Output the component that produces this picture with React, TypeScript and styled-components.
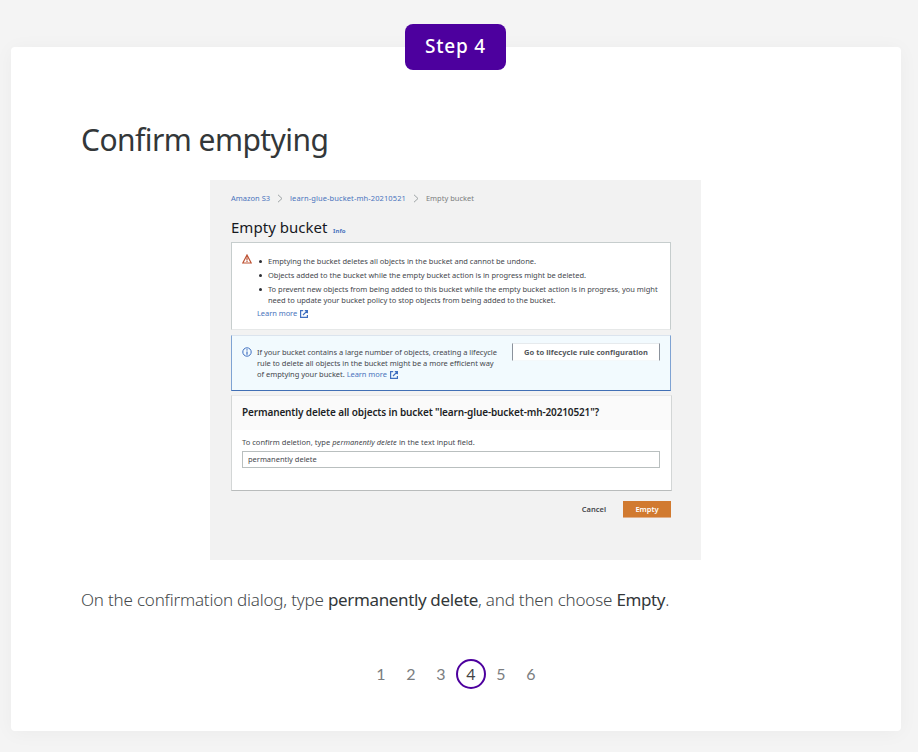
import React from 'react';
import styled, { createGlobalStyle } from 'styled-components';

const GlobalStyle = createGlobalStyle`
  * { box-sizing: border-box; }
  body {
    margin: 0;
    background: #f4f4f4;
    font-family: "Noto Sans", "Open Sans", sans-serif;
    color: #333;
  }
  h1, h2, h3, p, ul, ol { margin: 0; padding: 0; }
`;

const Page = styled.main`
  height: 752px;
  padding: 24px 17px 21px 11px;
  display: flex;
  flex-direction: column;
  overflow: hidden;
`;

const StepBadge = styled.div`
  z-index: 1;
  width: 101px;
  height: 46px;
  margin: 0 0 -23px -1px;
  align-self: center;
  flex: none;
  display: flex;
  align-items: center;
  justify-content: center;
  padding-bottom: 2px;
  border-radius: 8px;
  background: #4d009e;
  color: #fff;
  font-size: 19px;
  font-weight: 500;
  letter-spacing: 0.8px;
`;

const Card = styled.section`
  flex: 1;
  display: flex;
  flex-direction: column;
  padding: 70px 70px 0;
  border-radius: 4px;
  background: #fff;
  box-shadow: 0 2px 20px rgba(0, 0, 0, 0.04);
`;

const Heading = styled.h1`
  height: 63px;
  line-height: 46px;
  font-size: 30px;
  font-weight: 370;
  letter-spacing: -0.55px;
  color: #333739;
`;

const Caption = styled.p`
  margin-top: 28px;
  line-height: 24px;
  font-size: 17px;
  font-weight: 300;
  letter-spacing: -0.2px;
  color: #45494b;
  white-space: nowrap;
  strong {
    font-weight: 430;
    letter-spacing: -0.36px;
    color: #333739;
  }
`;

const Pager = styled.nav`
  display: flex;
  justify-content: center;
  margin-top: 47px;
`;

const PageNumber = styled.a<{ $current?: boolean }>`
  width: 30px;
  height: 30px;
  padding-bottom: 1px;
  display: flex;
  align-items: center;
  justify-content: center;
  border: 2px solid ${(p) => (p.$current ? '#4d009e' : 'transparent')};
  border-radius: 50%;
  font-family: Lato, sans-serif;
  font-size: 16px;
  color: ${(p) => (p.$current ? '#444' : '#7b7d80')};
`;

const Figure = styled.div`
  width: 491px;
  height: 380px;
  margin-left: 129px;
  padding: 12px 30px 0 21px;
  flex: none;
  display: flex;
  flex-direction: column;
  background: #f2f2f2;
  font-size: 7.5px;
  line-height: 11px;
  color: #45474d;
  white-space: nowrap;
`;

const Breadcrumbs = styled.div`
  display: flex;
  align-items: center;
  height: 12px;
  color: #4a74bd;
`;

const Crumb = styled.span<{ $tracking?: number; $muted?: boolean }>`
  letter-spacing: ${(p) => p.$tracking ?? 0}px;
  color: ${(p) => (p.$muted ? '#7c7e80' : 'inherit')};
`;

const Chevron = styled.svg`
  width: 6px;
  height: 9px;
  margin: 0 7px;
  fill: none;
  stroke: #9da3a5;
`;

const TitleRow = styled.div`
  display: flex;
  align-items: baseline;
  height: 38px;
  padding-top: 12px;
  gap: 5.5px;
`;

const Title = styled.h2`
  font-size: 15px;
  line-height: 22px;
  font-weight: 400;
  letter-spacing: 0.03px;
  color: #17191f;
`;

const InfoLink = styled.span`
  font-size: 6px;
  font-weight: 700;
  letter-spacing: 0.1px;
  color: #4a74bd;
`;

const Warning = styled.div`
  display: flex;
  width: 440px;
  height: 88px;
  padding: 13px 10px 0;
  border: 1px solid #c6cdcd;
  border-bottom-color: #e6e8e8;
  background: #fff;
`;

const StatusIcon = styled.svg<{ $lift?: number }>`
  width: 10px;
  height: 10px;
  margin-top: ${(p) => -(p.$lift ?? 0)}px;
  margin-right: 5px;
  flex: none;
  fill: none;
`;

const BulletList = styled.ul`
  display: flex;
  flex-direction: column;
  gap: 3px;
  list-style: none;
`;

const Bullet = styled.li<{ $tracking: number }>`
  display: flex;
  letter-spacing: ${(p) => p.$tracking}px;
  &::before {
    content: "";
    width: 3px;
    height: 3px;
    margin: 4px 6px 0 2px;
    border-radius: 50%;
    background: #2c2e34;
  }
`;

const Link = styled.a<{ $gapTop?: number }>`
  display: inline-flex;
  align-items: center;
  gap: 3px;
  margin-top: ${(p) => p.$gapTop ?? 0}px;
  letter-spacing: -0.06px;
  color: #4a74bd;
  svg { width: 8px; height: 8px; fill: none; stroke: #3f6fc0; stroke-width: 1.2; }
`;

const Notice = styled.div`
  display: flex;
  width: 440px;
  height: 56px;
  margin-top: 5px;
  padding: 11px 10px 0;
  border: 1px solid #7fa3d3;
  border-top-color: #dbe4ee;
  border-bottom-color: #416fb5;
  background: #f2fafe;
`;

const NoticeText = styled.div`
  flex: 1;
  letter-spacing: -0.03px;
`;

const NoticeLine = styled.div`
  display: flex;
  height: 11px;
`;

const RuleButton = styled.button`
  width: 148px;
  height: 18px;
  margin-top: -4px;
  padding: 1px 0 0;
  border: 1px solid #8b929c;
  border-top-color: #e6eaed;
  border-bottom-color: #f4f8fa;
  background: #fff;
  font: 700 7.5px/11px "Noto Sans", sans-serif;
  letter-spacing: 0.05px;
  color: #54575c;
`;

const Confirm = styled.div`
  width: 441px;
  height: 96px;
  margin-top: 4px;
  border: 1px solid #d3d6d6;
  border-top-color: #e9e9e9;
  border-bottom-color: #b9bcbc;
  background: #fff;
`;

const ConfirmHeader = styled.h3`
  height: 34px;
  padding: 8px 10px 0;
  background: #fafafa;
  font-size: 10px;
  line-height: 16px;
  font-weight: 650;
  letter-spacing: -0.13px;
  color: #1d1f26;
`;

const ConfirmBody = styled.div`
  display: flex;
  flex-direction: column;
  padding: 7px 11px 0 10px;
  letter-spacing: 0.025px;
`;

const Input = styled.div`
  height: 17px;
  margin-top: 3px;
  padding: 2px 5px;
  border: 1px solid #b9bfbf;
  background: #fff;
  letter-spacing: -0.02px;
`;

const Actions = styled.div`
  display: flex;
  justify-content: flex-end;
  align-items: center;
  gap: 17px;
  margin-top: 10px;
  font-weight: 650;
`;

const PrimaryAction = styled.span`
  width: 48px;
  height: 17px;
  line-height: 16px;
  text-align: center;
  background: #d17a30;
  border-bottom: 1px solid #e2b08a;
  color: #fff;
`;

const ChevronRight = () => (
  <Chevron viewBox="0 0 6 9"><path d="M1 .8 5 4.5 1 8.2" /></Chevron>
);

const ExternalIcon = () => (
  <svg viewBox="0 0 8 8">
    <path d="M3.2.7H.6v6.7h6.8V4.9M4.8.6h2.6v2.7M7.2.8 3 5" />
  </svg>
);

const pages = [1, 2, 3, 4, 5, 6];

export default function App() {
  return (
    <Page>
      <GlobalStyle />
      <StepBadge>Step 4</StepBadge>
      <Card>
        <Heading>Confirm emptying</Heading>
        <Figure>
          <Breadcrumbs>
            <Crumb>Amazon S3</Crumb>
            <ChevronRight />
            <Crumb $tracking={0.1}>learn-glue-bucket-mh-20210521</Crumb>
            <ChevronRight />
            <Crumb $muted>Empty bucket</Crumb>
          </Breadcrumbs>
          <TitleRow>
            <Title>Empty bucket</Title>
            <InfoLink>Info</InfoLink>
          </TitleRow>
          <Warning>
            <StatusIcon viewBox="0 0 10 10" stroke="#bd5233" $lift={2}>
              <path d="M5 1 9.2 9H.8ZM5 3.6v2.8M5 7v1" strokeWidth="1.2" />
            </StatusIcon>
            <div>
              <BulletList>
                <Bullet $tracking={-0.013}>Emptying the bucket deletes all objects in the bucket and cannot be undone.</Bullet>
                <Bullet $tracking={-0.024}>Objects added to the bucket while the empty bucket action is in progress might be deleted.</Bullet>
                <Bullet $tracking={-0.026}>
                  <div>
                    To prevent new objects from being added to this bucket while the empty bucket action is in progress, you might
                    <br />
                    need to update your bucket policy to stop objects from being added to the bucket.
                  </div>
                </Bullet>
              </BulletList>
              <Link $gapTop={2}>Learn more <ExternalIcon /></Link>
            </div>
          </Warning>
          <Notice>
            <StatusIcon viewBox="0 0 10 10" stroke="#3f6fc0">
              <circle cx="5" cy="5" r="4.2" />
              <path d="M5 2.2v1.2M5 4.4v3.3" strokeWidth="1.2" />
            </StatusIcon>
            <NoticeText>
              <NoticeLine>If your bucket contains a large number of objects, creating a lifecycle</NoticeLine>
              <NoticeLine>rule to delete all objects in the bucket might be a more efficient way</NoticeLine>
              <NoticeLine>of emptying your bucket.&nbsp;<Link>Learn more <ExternalIcon /></Link></NoticeLine>
            </NoticeText>
            <RuleButton>Go to lifecycle rule configuration</RuleButton>
          </Notice>
          <Confirm>
            <ConfirmHeader>Permanently delete all objects in bucket "learn-glue-bucket-mh-20210521"?</ConfirmHeader>
            <ConfirmBody>
              <div>To confirm deletion, type <em>permanently delete</em> in the text input field.</div>
              <Input>permanently delete</Input>
            </ConfirmBody>
          </Confirm>
          <Actions>
            <span>Cancel</span>
            <PrimaryAction>Empty</PrimaryAction>
          </Actions>
        </Figure>
        <Caption>
          On the confirmation dialog, type <strong>permanently delete</strong>, and then choose <strong>Empty</strong>.
        </Caption>
        <Pager>
          {pages.map((n) => (
            <PageNumber key={n} $current={n === 4}>{n}</PageNumber>
          ))}
        </Pager>
      </Card>
    </Page>
  );
}
